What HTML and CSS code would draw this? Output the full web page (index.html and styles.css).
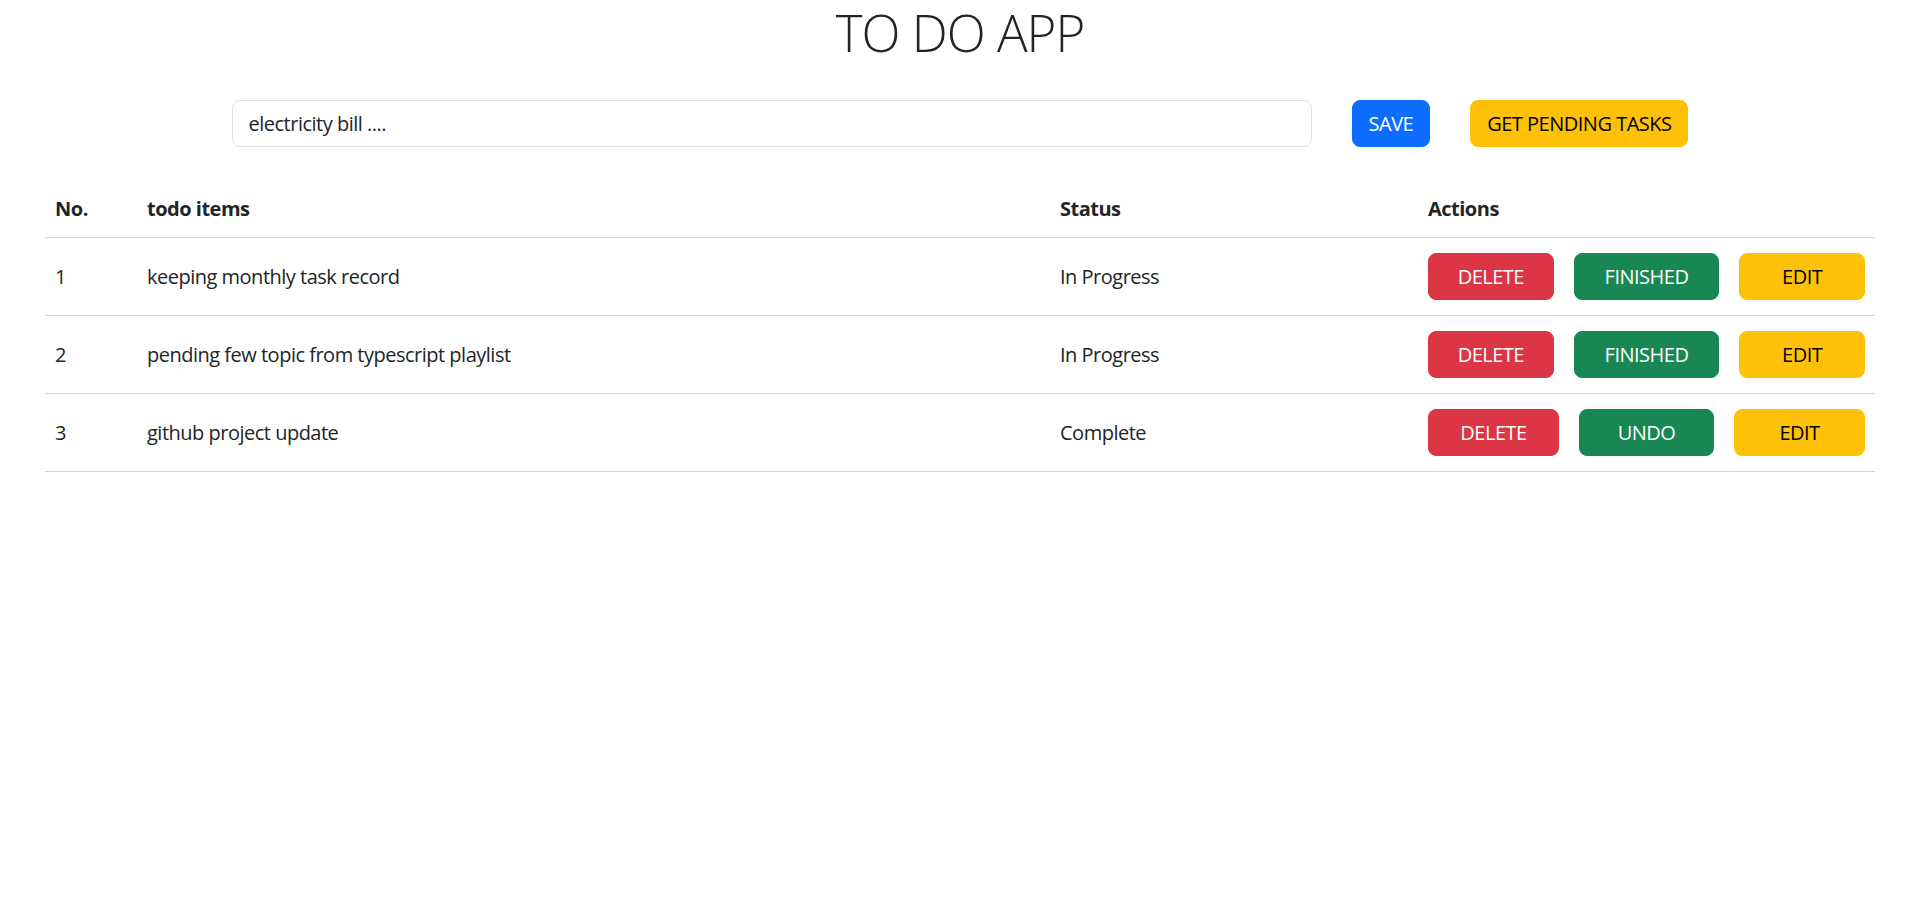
FILE: index.html
```html
<!DOCTYPE html>
<html lang="en">
<head>
<meta charset="utf-8">
<title>TO DO APP</title>
<link rel="stylesheet" href="styles.css">
</head>
<body>
<h1 class="title">TO DO APP</h1>
<div class="entry">
  <input class="entry-input" type="text" value="electricity bill ....">
  <button class="btn btn-primary">SAVE</button>
  <button class="btn btn-warning">GET PENDING TASKS</button>
</div>
<table class="todo-table">
  <colgroup>
    <col class="c-no"><col class="c-item"><col class="c-status"><col class="c-actions">
  </colgroup>
  <thead>
    <tr><th>No.</th><th>todo items</th><th>Status</th><th>Actions</th></tr>
  </thead>
  <tbody>
    <tr>
      <td>1</td><td>keeping monthly task record</td><td>In Progress</td>
      <td><div class="actions"><button class="btn btn-danger">DELETE</button><button class="btn btn-success">FINISHED</button><button class="btn btn-warning">EDIT</button></div></td>
    </tr>
    <tr>
      <td>2</td><td>pending few topic from typescript playlist</td><td>In Progress</td>
      <td><div class="actions"><button class="btn btn-danger">DELETE</button><button class="btn btn-success">FINISHED</button><button class="btn btn-warning">EDIT</button></div></td>
    </tr>
    <tr>
      <td>3</td><td>github project update</td><td>Complete</td>
      <td><div class="actions"><button class="btn btn-danger">DELETE</button><button class="btn btn-success">UNDO</button><button class="btn btn-warning">EDIT</button></div></td>
    </tr>
  </tbody>
</table>
</body>
</html>
```

FILE: styles.css
```css
html, body {
  margin: 0;
  padding: 0;
  background: #fff;
}
body {
  font-family: "Open Sans", "Noto Sans", sans-serif;
  color: #212529;
  font-size: 20px;
  line-height: 1.5;
  letter-spacing: -0.5px;
}
.title {
  margin: 0;
  padding-top: 1px;
  font-size: 51px;
  font-weight: 350;
  line-height: 62px;
  letter-spacing: -1px;
  text-align: center;
  color: #212529;
}
.entry {
  display: flex;
  justify-content: center;
  gap: 40px;
  margin-top: 37px;
}
.entry-input {
  box-sizing: border-box;
  width: 1080px;
  height: 47px;
  padding: 0 16px;
  border: 1px solid #dee2e6;
  border-radius: 8px;
  font-family: inherit;
  font-size: 20px;
  letter-spacing: -0.5px;
  color: #212529;
  background: #fff;
  outline: none;
}
.btn {
  box-sizing: border-box;
  height: 47px;
  padding: 0 16px;
  border: 1px solid transparent;
  border-radius: 8px;
  font-family: inherit;
  font-size: 20px;
  letter-spacing: -0.5px;
  line-height: 1;
  white-space: nowrap;
  cursor: pointer;
}
.btn-primary { background: #0d6efd; border-color: #0d6efd; color: #fff; }
.btn-warning { background: #ffc107; border-color: #ffc107; color: #000; }
.btn-danger { background: #dc3545; border-color: #dc3545; color: #fff; }
.btn-success { background: #198754; border-color: #198754; color: #fff; }

.todo-table {
  box-sizing: border-box;
  width: 1830px;
  margin: 30px 45px 0;
  border-collapse: collapse;
  table-layout: fixed;
}
.c-no { width: 92px; }
.c-item { width: 913px; }
.c-status { width: 368px; }
.c-actions { width: 457px; }
.todo-table th,
.todo-table td {
  padding: 15px 10px;
  text-align: left;
  vertical-align: middle;
  border-bottom: 1px solid #d2d4d6;
  line-height: 30px;
}
.todo-table th {
  font-weight: 700;
  padding-top: 17px;
  padding-bottom: 13px;
}
.actions {
  display: flex;
  gap: 20px;
}
.actions .btn {
  flex: 1 1 0;
  padding: 0 28px;
}
.actions .btn-success {
  padding: 0 30px;
}
```
